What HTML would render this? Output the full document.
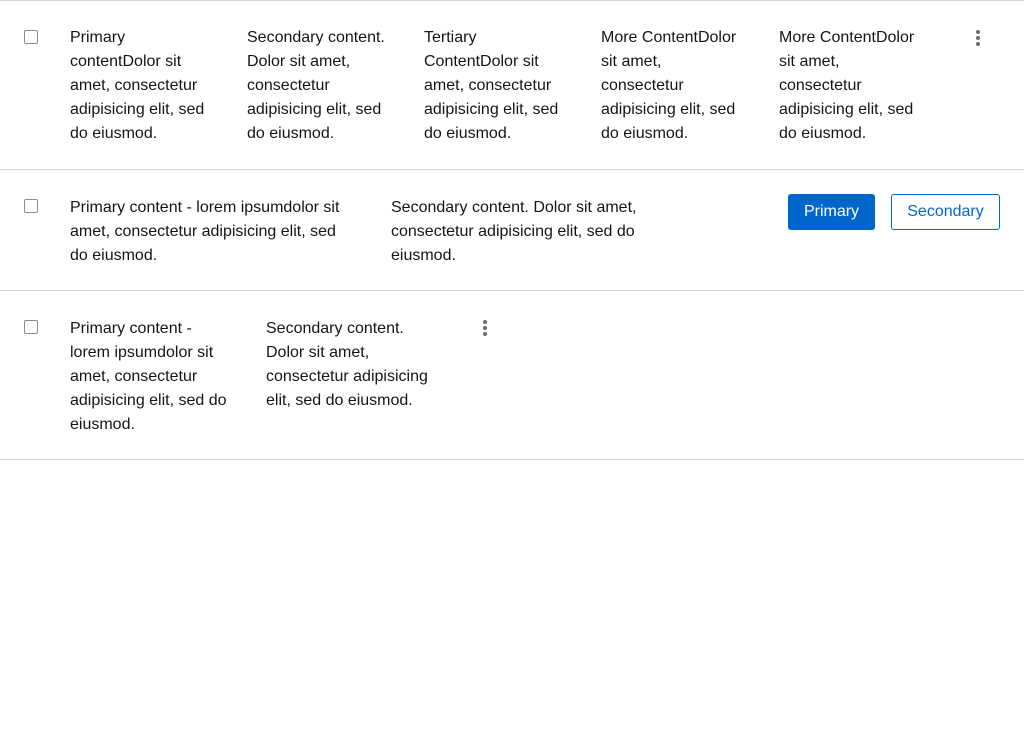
<!DOCTYPE html>
<html><head><style>
body{margin:0;width:1024px;height:730px;background:#fff;font-family:"Liberation Sans",sans-serif;font-size:16px;line-height:24px;color:#151515;position:relative;overflow:hidden}
.l{position:absolute;left:0;width:1024px;height:1px;background:#d2d2d2}
.t{position:absolute;white-space:nowrap}
.cb{position:absolute;left:24px;width:12px;height:12px;border:1px solid #8a8d90;border-radius:2px;background:#fff}
.k{position:absolute;width:4px}
.k i{display:block;width:4px;height:4px;border-radius:50%;background:#6a6e73;margin-bottom:2px}
.btn{position:absolute;top:194px;height:36px;box-sizing:border-box;border-radius:3px;font-size:16px;text-align:center}
</style></head><body>
<div class="l" style="top:0"></div>
<div class="l" style="top:169px"></div>
<div class="l" style="top:290px"></div>
<div class="l" style="top:459px"></div>

<div class="cb" style="top:30px"></div>
<div class="t" style="left:70px;top:26px">Primary<br>contentDolor sit<br>amet, consectetur<br>adipisicing elit, sed<br>do eiusmod.</div>
<div class="t" style="left:247px;top:26px">Secondary content.<br>Dolor sit amet,<br>consectetur<br>adipisicing elit, sed<br>do eiusmod.</div>
<div class="t" style="left:424px;top:26px">Tertiary<br>ContentDolor sit<br>amet, consectetur<br>adipisicing elit, sed<br>do eiusmod.</div>
<div class="t" style="left:601px;top:26px">More ContentDolor<br>sit amet,<br>consectetur<br>adipisicing elit, sed<br>do eiusmod.</div>
<div class="t" style="left:779px;top:26px">More ContentDolor<br>sit amet,<br>consectetur<br>adipisicing elit, sed<br>do eiusmod.</div>
<div class="k" style="left:976px;top:30px"><i></i><i></i><i></i></div>

<div class="cb" style="top:199px"></div>
<div class="t" style="left:70px;top:196px">Primary content - lorem ipsumdolor sit<br>amet, consectetur adipisicing elit, sed<br>do eiusmod.</div>
<div class="t" style="left:391px;top:196px">Secondary content. Dolor sit amet,<br>consectetur adipisicing elit, sed do<br>eiusmod.</div>
<div class="btn" style="left:788px;width:87px;background:#0066cc;color:#fff;line-height:36px">Primary</div>
<div class="btn" style="left:891px;width:109px;border:1px solid #0066cc;color:#0066cc;line-height:34px">Secondary</div>

<div class="cb" style="top:320px"></div>
<div class="t" style="left:70px;top:317px">Primary content -<br>lorem ipsumdolor sit<br>amet, consectetur<br>adipisicing elit, sed do<br>eiusmod.</div>
<div class="t" style="left:266px;top:317px">Secondary content.<br>Dolor sit amet,<br>consectetur adipisicing<br>elit, sed do eiusmod.</div>
<div class="k" style="left:483px;top:320px"><i></i><i></i><i></i></div>
</body></html>
